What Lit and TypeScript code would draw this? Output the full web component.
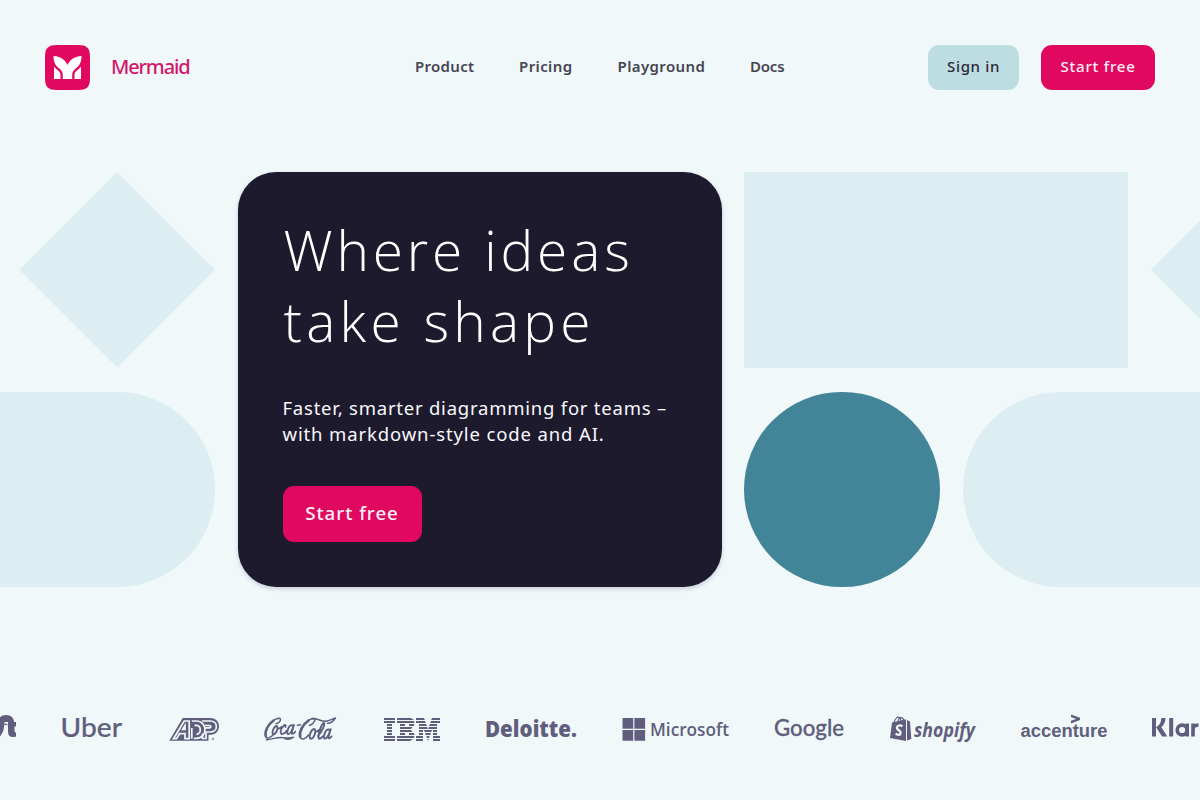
import { LitElement, html, css, svg } from "lit";
import { customElement } from "lit/decorators.js";

const label = (x: number, y: number, size: number, width: number, text: string, cls = "") => svg`
  <text class=${cls} x=${x} y=${y} font-size=${size} textLength=${width} lengthAdjust="spacingAndGlyphs">${text}</text>`;

const BRANDS = [
  { name: "Airbnb", x: 0, w: 16, art: svg`
    <path fill-rule="evenodd" d="M-6 736C-6 723-1 715 6 715c5 0 8 3 8 7h2v4.500h-1.500v4c0 1.500.5 2 1.500 2v4c-5 1.500-8 0-8-5v-5c0-4-4-4-4 0 0 5-3 9-5 11zM4.500 722v3h3.500v-3z"/>` },
  { name: "Uber", x: 62, w: 60, art: label(60.5, 736.5, 27.5, 61.5, "Uber", "geo") },
  { name: "ADP", x: 168, w: 50, art: svg`
    <path d="M169.300 740.800l13.400-22.800h28c5 0 8.300 3.700 8.300 8.300s-3.300 8.400-8.300 8.400H208.500v6.100z"/>
    <g fill="none" stroke="#f0f8fa" stroke-width="1.700">
      <path d="M173.500 738.700h3l3-5h5.500v5h4.200V721h-5z"/>
      <path d="M182.600 729.500h2.400v-4z"/>
      <path d="M191.800 738.700V728M191.800 721h4.500c11.500 0 11.500 17.300 0 17.300h-2.500M194.500 725.300h2c5 .5 5 8.500 0 9"/>
      <path d="M202 721h8c8.500 0 8.500 11 0 11h-4v6.500h-3.500v-5M204.500 725.500h5c1.800 0 1.800 2.300 0 2.300h-5"/>
    </g>
    <circle cx="213" cy="739" r="1.300" opacity=".55"/>` },
  { name: "Coca-Cola", x: 264, w: 73, art: svg`
    <g fill="none" stroke="currentColor" stroke-width="1.500" stroke-linecap="round" stroke-linejoin="round">
      <path stroke-width="2.500" d="M273.500 720.500c-5.500 4-9 11-7.800 15.500"/>
      <path d="M273 721c3-2.500 7-3.500 7.500-1.800.3 1.700-2 4.200-4.300 4.600M265.700 736c.6 3.500 4.500 2.200 8.300-2"/>
      <path stroke-width="1.800" d="M276.500 726c-3 .5-5.500 8-3 8.300 3 0 5.500-8.300 3-8.300zm1.500 2.500c1.500.3 2.500-.5 3.500-1.500M285.500 727c.8-2-.5-2.500-1.800-1.300-3 2.500-4.200 8-1.700 8.400 2 0 4-1.800 5.500-4M292.500 725.800c-.8-1.200-2.500-.3-3.500 1.200-1.500 2.500-2.500 6.800-.8 7.100 2 .2 4.500-5.300 5.800-9.300l-2.200 7.400c-.5 2.300 1.500 2 3.500-.5"/>
      <path d="M297.500 725.300l3-.6"/>
      <path stroke-width="2.700" d="M308.500 720.500c-6 4-9.500 11.500-8.300 16.200"/>
      <path d="M308 721c3-2.500 7-3.500 7-1.800.3 2.200-2.500 5.300-5.500 6.300M300.200 736.700c1 4 5.300 2.500 8.300-1.700"/>
      <path stroke-width="1.900" d="M314.300 729c-3.800.5-6.300 9.300-3.500 9.800 3.500.2 6-9.500 3.500-9.800zm1.300 2.500c1.500.4 2.500-.4 3.500-1.600M318 736c3.500-4 7.500-11.500 6-13-2.300-1-7.500 15.500-4.700 15.700 1.300 0 2.500-1.200 3.500-2.400M329.200 730c-.8-1.300-2.500-.3-3.500 1.300-1.500 2.500-2.500 7-.8 7.300 2 .2 4.500-5.300 5.800-9.500l-2.200 7.600c-.4 2.300 1.300 2 3-.2"/>
      <path stroke-width="1.400" d="M312 719c6-1.500 9 3.500 15 2 3.500-.8 6-2.500 8.500-3-2.500 3.500-5.500 5.500-8 5.300M266.500 739.800c7-1 11-2.500 16-2.200 5 .3 7 1 11-.4-3 2.600-7.500 2.800-10.500.6"/>
    </g>` },
  { name: "IBM", x: 383, w: 57, art: svg`
    <path d="M384 718h11v2h-11zM384 721h11v2h-11zM387 724h5v2h-5zM387 727h5v2h-5zM387 730h5v2h-5zM387 733h5v2h-5zM384 736h11v2h-11zM384 739h11v2h-11z
      M397 718h14l3 2h-17zM397 721h17l.5 2H397zM400 724h5v2h-5zM409 724h5.500l-.8 2H409zM400 727h12.500l-1.500 2h-11zM400 730h11l1.500 2H400zM400 733h5v2h-5zM409 733h5l.5 2H409zM397 736h17.500l-.7 2H397zM397 739h16l-3 2h-13z
      M416 718h8l.8 2H416zM416 721h9l.8 2H416zM419 724h7.200l.7 2H419zM419 727h8.200l.6 2H419zM419 730h4v2h-4zM419 733h4v2h-4zM416 736h7v2h-7zM416 739h7v2h-7z
      M432 718h8v2h-8.800zM431 721h9v2h-9.800zM429.800 724h7.200v2h-7.900zM428.800 727h8.200v2h-8.800zM424 730h8l-.7 2h-6.600zM433 730h4v2h-4zM425 733h6l-.8 2h-4.400zM433 733h4v2h-4zM426.300 736h3.400l-.7 2h-2zM433 736h7v2h-7zM427.300 739h1.400l-.7 2zM433 739h7v2h-7z"/>` },
  { name: "Deloitte", x: 486, w: 90, art: label(485, 736.5, 23, 92, "Deloitte.", "heavy") },
  { name: "Microsoft", x: 622, w: 106, art: svg`
    <path d="M622.500 718h10.700v10.700h-10.700zM634.400 718h10.700v10.700h-10.700zM622.500 730h10.700v10.700h-10.700zM634.400 730h10.700v10.700h-10.700z"/>
    ${label(650, 736, 18.5, 79, "Microsoft", "semi")}` },
  { name: "Google", x: 774, w: 69, art: label(774, 736, 22.5, 70, "Google", "google") },
  { name: "Shopify", x: 889, w: 86, art: svg`
    <path d="M892 722.500l14-3.200v21.700l-16-3zM907 720l3 1.500 1.300 17.500-4.300 1.500z"/>
    <path d="M894 723c1-5 4-7 6-5 1 1 1 3 1 4M898 721c1-4 5-5 6 0" fill="none" stroke="currentColor" stroke-width="1.100"/>
    <path d="M902.500 726.200c-3-1.800-6-.2-5.500 2 .5 2.300 4 2 3.600 5-.4 2.300-3 2-5 .5" fill="none" stroke="#f0f8fa" stroke-width="2.200"/>
    ${label(914, 736.5, 20, 61, "shopify", "slanted")}` },
  { name: "Accenture", x: 1021, w: 85, art: svg`
    ${label(1020.5, 736.5, 17.5, 87, "accenture", "arial")}
    <path d="M1071 714.500l9 3.200v2.300l-9 3.500v-2.700l5.200-1.900-5.200-1.900z"/>` },
  { name: "Klarna", x: 1152, w: 48, art: svg`
    <path d="M1152 718h4v18.500h-4zM1161.300 718h4.200c0 4-1.600 7-4.200 9.200l6 9.300h-5.200l-6-9.300c3.500-2 5.200-5 5.200-9.200zM1169.200 718h4v18.500h-4z"/>
    <path fill="none" stroke="currentColor" stroke-width="3.600" d="M1187.200 723.600v12.900M1187 730a4.900 4.900 0 1 1-9.800 0 4.900 4.900 0 0 1 9.800 0M1193 736.500v-12.900M1193 730c0-4 2-5 5.500-5"/>` },
];

@customElement("brand-strip")
class BrandStrip extends LitElement {
  static styles = css`
    :host { display: flex; gap: 46px; overflow: hidden; color: #605e7c; }
    .brand { flex: none; display: block; height: 60px; overflow: visible; fill: currentColor; font-family: "Open Sans", sans-serif; }
    .geo { font-family: Lato, sans-serif; font-weight: 500; stroke: currentColor; stroke-width: .2px; }
    .heavy { font-weight: 800; }
    .semi { font-weight: 600; }
    .google { font-family: Lato, sans-serif; font-weight: 500; stroke: currentColor; stroke-width: .3px; }
    .slanted { font-weight: 700; font-style: italic; }
    .arial { font-family: "Liberation Sans", sans-serif; font-weight: 700; }
  `;
  render() {
    return BRANDS.map((b) => html`
      <svg class="brand" role="img" aria-label=${b.name} width=${b.w} height="60" viewBox="${b.x} 700 ${b.w} 60">${b.art}</svg>`);
  }
}

@customElement("app-root")
class AppRoot extends LitElement {
  static styles = css`
    :host { display: flex; flex-direction: column; box-sizing: border-box; height: 800px; overflow: hidden; background: #f0f8fa; font-family: "Noto Sans", "Open Sans", sans-serif; color: #464551; }
    a { color: inherit; text-decoration: none; white-space: nowrap; }
    .header { flex: none; display: grid; grid-template-columns: 370px 1fr auto; align-items: center; height: 45px; padding: 45px 45px 0; }
    .home { display: flex; align-items: center; gap: 21px; color: #d3176a; }
    .mark { display: block; width: 45px; height: 45px; }
    .name { font-size: 20px; font-weight: 500; letter-spacing: -1.150px; line-height: 43px; padding-bottom: 2px; }
    .links { display: flex; gap: 45px; font-size: 15px; font-weight: 600; padding-bottom: 3px; }
    .l1 { width: 59px; letter-spacing: .3px; }
    .l2 { width: 53.5px; letter-spacing: .4px; }
    .l3 { width: 87.500px; letter-spacing: .4px; }
    .l4 { letter-spacing: -.2px; }
    .actions { display: flex; gap: 22px; }
    .button { display: flex; align-items: center; justify-content: center; box-sizing: border-box; border-radius: 11px; padding-bottom: 3px; font-weight: 500; color: #fff0f7; background: #e0095f; }
    .small { height: 45px; width: 114px; font-size: 15px; letter-spacing: .8px; }
    .quiet { width: 91px; background: #bedde3; color: #292839; letter-spacing: .65px; }
    .hero { flex: none; display: flex; gap: 22.500px; margin-top: 82px; height: 415px; }
    .side { flex: none; display: flex; flex-direction: column; justify-content: space-between; }
    .left { width: 215px; align-items: flex-end; }
    .row { display: flex; gap: 23.500px; height: 195.500px; }
    .shape { flex: none; width: 195.500px; height: 195.500px; background: #dceef2; }
    .diamond { clip-path: polygon(50% 0, 100% 50%, 50% 100%, 0 50%); }
    .wide { width: 383.500px; }
    .pill { width: 414px; border-radius: 98px; }
    .circle { border-radius: 50%; background: #428598; }
    .card { flex: none; box-sizing: border-box; width: 484px; height: 415px; padding: 43px 45px 45px; border-radius: 38px; background: #1e1a2e; color: #fff; box-shadow: 0 2px 4px #1e1a2e30; }
    .title { margin: 0; padding-left: 1px; font-family: "Open Sans", sans-serif; font-weight: 300; font-size: 55px; line-height: 70.500px; white-space: nowrap; }
    .t1 { letter-spacing: 3.850px; }
    .t2 { letter-spacing: 4.250px; }
    .lead { margin: 39px 0 0; font-size: 18.500px; line-height: 26.300px; white-space: nowrap; color: #f8f8fc; }
    .p1 { letter-spacing: .77px; }
    .p2 { letter-spacing: .87px; }
    .large { width: 139px; height: 56px; margin-top: 38px; font-size: 18.700px; letter-spacing: 1px; }
    .brands { flex: none; margin-top: 113px; }
  `;
  render() {
    return html`
      <header class="header">
        <a class="home" href="#">
          <svg class="mark" viewBox="0 0 45 45" aria-hidden="true">
            <path fill="#e0095f" d="M12 0h21c9 0 12 3 12 12v21c0 9-3 12-12 12H12C3 45 0 42 0 33V12C0 3 3 0 12 0z"/>
            <path fill="#fff" d="M8.500 11c6.500 0 11.500 3.600 14 9 2.500-5.400 7.500-9 14-9 .2 5.500-1.800 9.500-5.600 12.300-2.800 2.200-3.700 4.200-3.700 7.200V34H17.800v-3.500c0-3-.9-5-3.700-7.200C10.300 20.500 8.300 16.500 8.500 11z"/>
            <path fill="#fff" d="M9 21.500c1 1.400 2 2.400 3.500 3.500 2.300 1.700 3 3 3 5.500V34H9zM36 21.500c-1 1.400-2 2.400-3.500 3.500-2.300 1.700-3 3-3 5.500V34H36z"/>
          </svg>
          <span class="name">Mermaid</span>
        </a>
        <nav class="links">
          <a class="l1" href="#">Product</a><a class="l2" href="#">Pricing</a><a class="l3" href="#">Playground</a><a class="l4" href="#">Docs</a>
        </nav>
        <div class="actions">
          <a class="button small quiet" href="#">Sign in</a>
          <a class="button small" href="#">Start free</a>
        </div>
      </header>
      <main class="hero">
        <div class="side left"><div class="shape diamond"></div><div class="shape pill"></div></div>
        <section class="card">
          <h1 class="title"><span class="t1">Where ideas</span><br><span class="t2">take shape</span></h1>
          <p class="lead"><span class="p1">Faster, smarter diagramming for teams –</span><br><span class="p2">with markdown-style code and AI.</span></p>
          <a class="button large" href="#">Start free</a>
        </section>
        <div class="side">
          <div class="row"><div class="shape wide"></div><div class="shape diamond"></div></div>
          <div class="row"><div class="shape circle"></div><div class="shape pill"></div></div>
        </div>
      </main>
      <brand-strip class="brands"></brand-strip>
    `;
  }
}
